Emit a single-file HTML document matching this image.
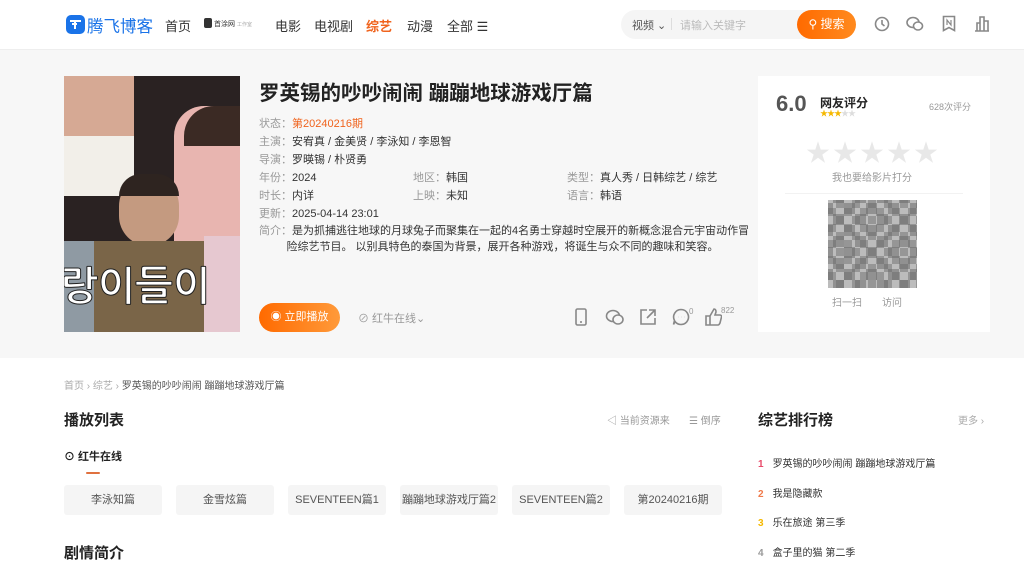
<!DOCTYPE html>
<html><head><meta charset="utf-8"><style>
*{margin:0;padding:0;box-sizing:border-box}
body{width:1024px;height:556px;overflow:hidden;background:#fff;font-family:"Liberation Sans","Noto Sans CJK SC",sans-serif;color:#333;position:relative}
.a{position:absolute;white-space:nowrap}
.hdr{position:absolute;left:0;top:0;width:1024px;height:50px;background:#fff;border-bottom:1px solid #eee}
.band{position:absolute;left:0;top:50px;width:1024px;height:308px;background:#f7f7f7}
.nav{font-size:13px;color:#333;top:16px}
.lab{color:#999}
.row{font-size:11px;color:#333;position:absolute;white-space:nowrap}
.ep{position:absolute;top:485px;width:98px;height:30px;background:#f5f5f5;border-radius:3px;font-size:11px;color:#555;text-align:center;line-height:30px}
.ic{position:absolute;stroke:#888;fill:none;stroke-width:1.6}
</style></head><body>
<div class="hdr"></div>
<div class="a" style="left:66px;top:15px;width:19px;height:19px;background:#1a73e8;border-radius:5px"></div>
<svg class="a" style="left:68px;top:18px" width="15" height="13" viewBox="0 0 15 13"><path d="M2 3h11M7 3v8M4 6h5" stroke="#fff" stroke-width="2" fill="none"/></svg>
<div class="a" style="left:87px;top:13px;font-size:16.5px;color:#1a73e8">腾飞博客</div>
<div class="a nav" style="left:165px">首页</div>
<div class="a" style="left:204px;top:18px;width:8px;height:10px;background:#333;border-radius:2px"></div>
<div class="a" style="left:214px;top:19px;font-size:7px;color:#333">首涂网 <span style="color:#aaa;font-size:5px">工作室</span></div>
<div class="a nav" style="left:275px">电影</div>
<div class="a nav" style="left:314px">电视剧</div>
<div class="a nav" style="left:366px;color:#f0641e;font-weight:bold">综艺</div>
<div class="a nav" style="left:407px">动漫</div>
<div class="a nav" style="left:447px">全部 ☰</div>
<div class="a" style="left:621px;top:10px;width:234px;height:29px;background:#f5f5f5;border-radius:15px"></div>
<div class="a" style="left:632px;top:17px;font-size:11px;color:#555">视频 ⌄</div>
<div class="a" style="left:671px;top:18px;width:1px;height:12px;background:#ddd"></div>
<div class="a" style="left:680px;top:17px;font-size:11px;color:#bbb">请输入关键字</div>
<div class="a" style="left:797px;top:10px;width:59px;height:29px;background:linear-gradient(90deg,#ff6a00,#ff8a1e);border-radius:15px;color:#fff;font-size:12px;line-height:29px;text-align:center">⚲ 搜索</div>
<svg class="ic" style="left:874px;top:16px" width="16" height="16"><circle cx="8" cy="8" r="6.5"/><path d="M8 4v4l2.5 2"/></svg>
<svg class="ic" style="left:906px;top:16px" width="18" height="16"><ellipse cx="7" cy="6.5" rx="6" ry="5"/><ellipse cx="12" cy="10" rx="4.5" ry="4" fill="#fff"/></svg>
<svg class="ic" style="left:942px;top:15px" width="14" height="17"><path d="M1.5 1.5h11v14l-5.5-3-5.5 3z"/><path d="M5 10V5l4 5V5" stroke-width="1.2"/></svg>
<svg class="ic" style="left:974px;top:15px" width="16" height="17"><path d="M1 16h14M3 16V8h3v8M6 16V2h4v14M10 16V6h4v10"/></svg>

<div class="band"></div>
<div class="a" style="left:64px;top:76px;width:176px;height:256px;overflow:hidden;background:#2a2222">
 <div class="a" style="left:0;top:0;width:70px;height:110px;background:#d6a994;border-radius:0 0 40px 30px"></div>
 <div class="a" style="left:0;top:60px;width:70px;height:60px;background:#f2efe9"></div>
 <div class="a" style="left:110px;top:30px;width:66px;height:150px;background:#e8b5b0;border-radius:30px 0 0 0"></div>
 <div class="a" style="left:120px;top:30px;width:56px;height:40px;background:#3b2a24;border-radius:30px 0 0 0"></div>
 <div class="a" style="left:55px;top:100px;width:60px;height:70px;background:#c49a80;border-radius:30px"></div>
 <div class="a" style="left:55px;top:98px;width:60px;height:22px;background:#2e2420;border-radius:30px 30px 0 0"></div>
 <div class="a" style="left:30px;top:165px;width:110px;height:91px;background:#7a6548"></div>
 <div class="a" style="left:0;top:165px;width:30px;height:91px;background:#8f9aa3"></div>
 <div class="a" style="left:140px;top:160px;width:36px;height:96px;background:#e6c8d0"></div>
 <div class="a" style="left:-4px;top:190px;font-size:40px;font-weight:bold;color:#fff;-webkit-text-stroke:1px #222;font-family:'NanumGothic',sans-serif">랑이들이</div>
</div>
<div class="a" style="left:259px;top:76px;font-size:20.5px;font-weight:bold;color:#222">罗英锡的吵吵闹闹 蹦蹦地球游戏厅篇</div>
<div class="row" style="left:259px;top:115px"><span class="lab">状态：</span><span style="color:#f0641e">第20240216期</span></div>
<div class="row" style="left:259px;top:133px"><span class="lab">主演：</span>安宥真 / 金美贤 / 李泳知 / 李恩智</div>
<div class="row" style="left:259px;top:151px"><span class="lab">导演：</span>罗暎锡 / 朴贤勇</div>
<div class="row" style="left:259px;top:169px"><span class="lab">年份：</span>2024</div>
<div class="row" style="left:413px;top:169px"><span class="lab">地区：</span>韩国</div>
<div class="row" style="left:567px;top:169px"><span class="lab">类型：</span>真人秀 / 日韩综艺 / 综艺</div>
<div class="row" style="left:259px;top:187px"><span class="lab">时长：</span>内详</div>
<div class="row" style="left:413px;top:187px"><span class="lab">上映：</span>未知</div>
<div class="row" style="left:567px;top:187px"><span class="lab">语言：</span>韩语</div>
<div class="row" style="left:259px;top:205px"><span class="lab">更新：</span>2025-04-14 23:01</div>
<div class="row" style="left:259px;top:223px;line-height:16px"><span class="lab">简介：</span>是为抓捕逃往地球的月球兔子而聚集在一起的4名勇士穿越时空展开的新概念混合元宇宙动作冒<br>&emsp;&emsp;&ensp;险综艺节目。 以别具特色的泰国为背景，展开各种游戏，将诞生与众不同的趣味和笑容。</div>
<div class="a" style="left:259px;top:303px;width:81px;height:29px;border-radius:15px;background:linear-gradient(90deg,#ff6a00,#ff9a3a);color:#fff;font-size:11px;line-height:29px;text-align:center">◉ 立即播放</div>
<div class="a" style="left:358px;top:310px;font-size:11px;color:#999">⊘ 红牛在线⌄</div>
<svg class="ic" style="left:575px;top:308px" width="12" height="18"><rect x="1" y="1" width="10" height="16" rx="1.5"/><path d="M5 14h2"/></svg>
<svg class="ic" style="left:605px;top:309px" width="20" height="16"><ellipse cx="8" cy="7" rx="6.5" ry="5.5"/><ellipse cx="13" cy="10.5" rx="5" ry="4.5" fill="#f7f7f7"/></svg>
<svg class="ic" style="left:640px;top:309px" width="16" height="16"><path d="M7 1H1v14h14V9M9 1h6v6M15 1L7 9"/></svg>
<svg class="ic" style="left:672px;top:308px" width="18" height="18"><path d="M9 1.5a7.5 7.5 0 1 1-6 12l-1.5 3 1-4A7.5 7.5 0 0 1 9 1.5z"/><path d="M6 9h.1M9 9h.1M12 9h.1" stroke-width="2"/></svg>
<div class="a" style="left:689px;top:307px;font-size:8px;color:#999">0</div>
<svg class="ic" style="left:705px;top:308px" width="17" height="18"><path d="M1 8h4v9H1zM5 8l4-7c2 0 2 2 2 3l-1 3h5c1 0 2 1 1.5 2l-1.5 6c-.5 1-1 2-2 2H5"/></svg>
<div class="a" style="left:721px;top:306px;font-size:8px;color:#999">822</div>

<div class="a" style="left:758px;top:76px;width:232px;height:256px;background:#fff"></div>
<div class="a" style="left:776px;top:91px;font-size:22px;font-weight:bold;color:#555">6.0</div>
<div class="a" style="left:820px;top:94px;font-size:12px;font-weight:bold;color:#222">网友评分</div>
<div class="a" style="left:820px;top:108px;font-size:8px;letter-spacing:-1px;color:#f5b800">★★★<span style="color:#ddd">★★</span></div>
<div class="a" style="left:929px;top:100px;font-size:9px;color:#999">628次评分</div>
<div class="a" style="left:806px;top:133px;font-size:24px;color:#e8e8e8;letter-spacing:3px">★★★★★</div>
<div class="a" style="left:832px;top:169px;font-size:10px;color:#999">我也要给影片打分</div>
<div class="a" style="left:785px;top:193px;width:178px;height:1px;background:#f2f2f2"></div>
<div class="a" style="left:828px;top:200px;width:89px;height:88px;background:
repeating-conic-gradient(#8a8a8a 0 25%,#b5b5b5 0 50%) 0 0/16px 16px;opacity:.9"></div>
<div class="a" style="left:828px;top:200px;width:89px;height:88px;background:
repeating-conic-gradient(#666 0 25%,transparent 0 50%) 5px 3px/22px 22px;opacity:.5"></div>
<div class="a" style="left:832px;top:294px;font-size:10px;color:#999">扫一扫<span style="color:#fff">手机</span>访问</div>

<div class="a" style="left:64px;top:377px;font-size:10px;color:#aaa">首页 › 综艺 › <span style="color:#555">罗英锡的吵吵闹闹 蹦蹦地球游戏厅篇</span></div>
<div class="a" style="left:64px;top:409px;font-size:15px;font-weight:bold;color:#222">播放列表</div>
<div class="a" style="left:607px;top:412px;font-size:10px;color:#999">◁ 当前资源来</div>
<div class="a" style="left:689px;top:412px;font-size:10px;color:#999">☰ 倒序</div>
<div class="a" style="left:64px;top:448px;font-size:11px;font-weight:bold;color:#222">⊙ 红牛在线</div>
<div class="a" style="left:86px;top:472px;width:14px;height:2px;background:#e0713f;border-radius:1px"></div>
<div class="ep" style="left:64px">李泳知篇</div>
<div class="ep" style="left:176px">金雪炫篇</div>
<div class="ep" style="left:288px">SEVENTEEN篇1</div>
<div class="ep" style="left:400px">蹦蹦地球游戏厅篇2</div>
<div class="ep" style="left:512px">SEVENTEEN篇2</div>
<div class="ep" style="left:624px">第20240216期</div>
<div class="a" style="left:64px;top:542px;font-size:15px;font-weight:bold;color:#222">剧情简介</div>

<div class="a" style="left:758px;top:409px;font-size:15px;font-weight:bold;color:#222">综艺排行榜</div>
<div class="a" style="left:958px;top:412px;font-size:10px;color:#aaa">更多 ›</div>
<div class="a" style="left:758px;top:455px;font-size:10px;color:#333"><b style="color:#e84a6a;margin-right:9px">1</b>罗英锡的吵吵闹闹 蹦蹦地球游戏厅篇</div>
<div class="a" style="left:758px;top:485px;font-size:10px;color:#333"><b style="color:#f07a4a;margin-right:9px">2</b>我是隐藏款</div>
<div class="a" style="left:758px;top:514px;font-size:10px;color:#333"><b style="color:#f5b800;margin-right:9px">3</b>乐在旅途 第三季</div>
<div class="a" style="left:758px;top:544px;font-size:10px;color:#333"><b style="color:#999;margin-right:9px">4</b>盒子里的猫 第二季</div>
</body></html>
